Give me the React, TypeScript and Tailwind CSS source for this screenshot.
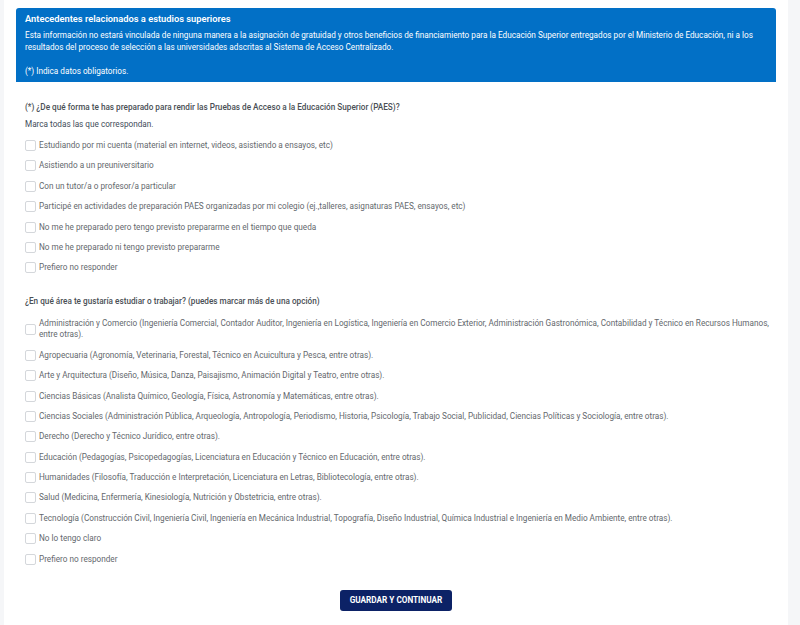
const preparacion = [
  'Estudiando por mi cuenta (material en internet, videos, asistiendo a ensayos, etc)',
  'Asistiendo a un preuniversitario',
  'Con un tutor/a o profesor/a particular',
  'Participé en actividades de preparación PAES organizadas por mi colegio (ej.,talleres, asignaturas PAES, ensayos, etc)',
  'No me he preparado pero tengo previsto prepararme en el tiempo que queda',
  'No me he preparado ni tengo previsto prepararme',
  'Prefiero no responder',
]

const areas = [
  'Administración y Comercio (Ingeniería Comercial, Contador Auditor, Ingeniería en Logística, Ingeniería en Comercio Exterior, Administración Gastronómica, Contabilidad y Técnico en Recursos Humanos, entre otras).',
  'Agropecuaria (Agronomía, Veterinaria, Forestal, Técnico en Acuicultura y Pesca, entre otras).',
  'Arte y Arquitectura (Diseño, Música, Danza, Paisajismo, Animación Digital y Teatro, entre otras).',
  'Ciencias Básicas (Analista Químico, Geología, Física, Astronomía y Matemáticas, entre otras).',
  'Ciencias Sociales (Administración Pública, Arqueología, Antropología, Periodismo, Historia, Psicología, Trabajo Social, Publicidad, Ciencias Políticas y Sociología, entre otras).',
  'Derecho (Derecho y Técnico Jurídico, entre otras).',
  'Educación (Pedagogías, Psicopedagogías, Licenciatura en Educación y Técnico en Educación, entre otras).',
  'Humanidades (Filosofía, Traducción e Interpretación, Licenciatura en Letras, Bibliotecología, entre otras).',
  'Salud (Medicina, Enfermería, Kinesiología, Nutrición y Obstetricia, entre otras).',
  'Tecnología (Construcción Civil, Ingeniería Civil, Ingeniería en Mecánica Industrial, Topografía, Diseño Industrial, Química Industrial e Ingeniería en Medio Ambiente, entre otras).',
  'No lo tengo claro',
  'Prefiero no responder',
]

function CheckItem({ label }: { label: string }) {
  return (
    <label className="flex items-center gap-[3px]">
      <input
        type="checkbox"
        className="appearance-none shrink-0 w-[11px] h-[11px] border border-[#d4d7db] rounded-[2px] bg-white"
      />
      <span className="text-[8.2px] leading-[11px] text-[#64686d]">{label}</span>
    </label>
  )
}

export default function App() {
  return (
    <div className="min-h-screen bg-[#f5f6f8] pl-[4px] pr-[12px] font-['Roboto',sans-serif]">
      <div className="bg-white min-h-screen px-3 pt-2 pb-4">
        <section className="bg-[#0270c6] rounded-t-[3px] text-white px-[9px] pt-[5px] pb-[5px]">
          <h2 className="text-[9.3px] leading-[12px] font-semibold">
            Antecedentes relacionados a estudios superiores
          </h2>
          <p className="mt-[4px] text-[8.2px] leading-[12px]">
            Esta información no estará vinculada de ninguna manera a la asignación de gratuidad y otros beneficios de financiamiento para la Educación Superior entregados por el Ministerio de Educación, ni a los resultados del proceso de selección a las universidades adscritas al Sistema de Acceso Centralizado.
          </p>
          <p className="mt-[12px] text-[8.2px] leading-[12px]">(*) Indica datos obligatorios.</p>
        </section>

        <div className="pl-[9px] pr-[2px]">
          <div className="mt-[20px]">
            <p className="text-[8.2px] leading-[11px] font-medium text-[#4a4f55]">
              (*) ¿De qué forma te has preparado para rendir las Pruebas de Acceso a la Educación Superior (PAES)?
            </p>
            <p className="mt-[6px] text-[8.2px] leading-[11px] text-[#3f4c5a]">Marca todas las que correspondan.</p>
            <div className="mt-[10px] flex flex-col gap-[9.4px]">
              {preparacion.map((p) => (
                <CheckItem key={p} label={p} />
              ))}
            </div>
          </div>

          <div className="mt-[23px]">
            <p className="text-[8.2px] leading-[11px] font-medium text-[#4a4f55]">
              ¿En qué área te gustaría estudiar o trabajar? (puedes marcar más de una opción)
            </p>
            <div className="mt-[11px] flex flex-col gap-[9.4px]">
              {areas.map((a) => (
                <CheckItem key={a} label={a} />
              ))}
            </div>
          </div>
        </div>

        <div className="mt-[25px] flex justify-center">
          <button className="h-[21px] px-[10px] rounded-[3px] bg-[#0c2266] text-white text-[8.2px] font-bold uppercase">
            Guardar y continuar
          </button>
        </div>
      </div>
    </div>
  )
}
